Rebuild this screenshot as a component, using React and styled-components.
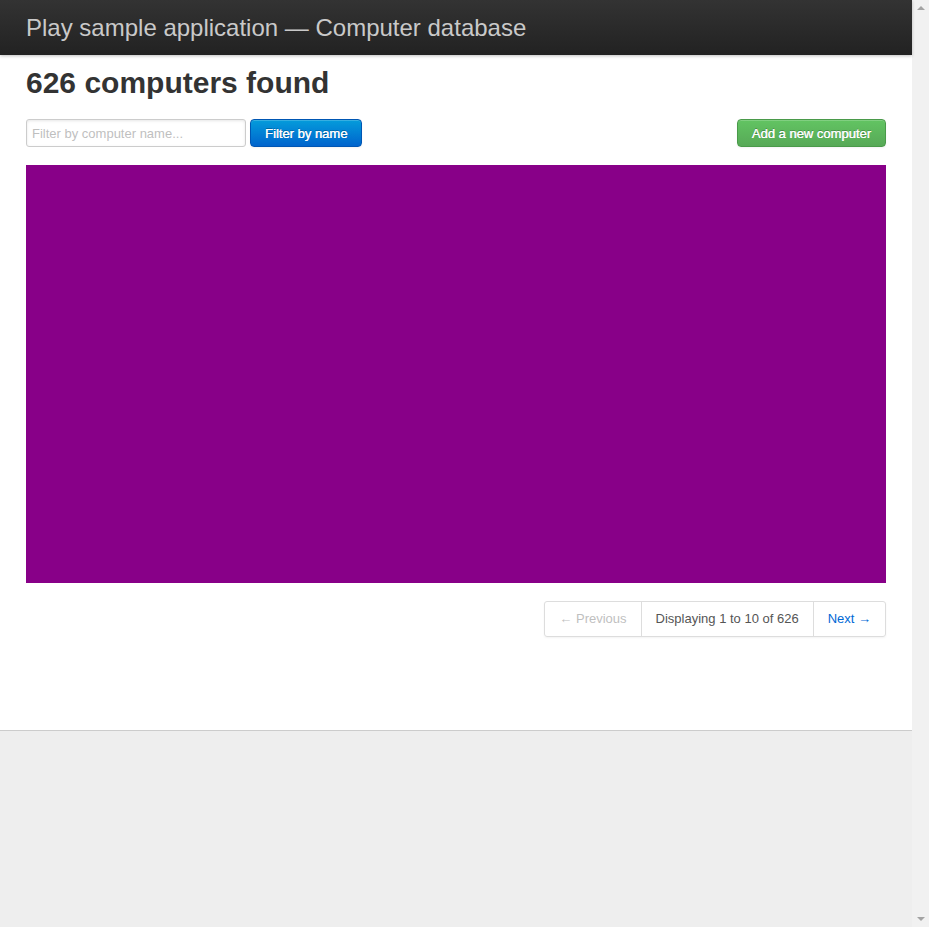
import styled, { createGlobalStyle } from 'styled-components'

const GlobalStyle = createGlobalStyle`
    body {
        margin: 0;
        background: #eeeeee;
        font-family: "Liberation Sans", Arial, sans-serif;
        color: #404040;
    }
`

const Viewport = styled.div`
    display: flex;
    min-height: 927px;
`

const Page = styled.div`
    flex: 1;
    min-width: 0;
`

const ScrollTrack = styled.div`
    width: 17px;
    flex-shrink: 0;
    background: #f1f1f1;
    display: flex;
    flex-direction: column;
    justify-content: space-between;
    align-items: center;
    padding: 6px 0;
    box-sizing: border-box;
`

const ScrollArrow = styled.span`
    width: 0;
    height: 0;
    border-left: 4px solid transparent;
    border-right: 4px solid transparent;
    border-${props => props.$down ? 'top' : 'bottom'}: 4px solid #a3a3a3;
`

const Header = styled.header`
    height: 55px;
    background: linear-gradient(to bottom, #333333, #222222);
    box-shadow: 0 1px 3px rgba(0, 0, 0, 0.25);
    position: relative;
    z-index: 1;
`

const HeaderTitle = styled.h1`
    width: 860px;
    margin: 0 auto;
    padding-top: 13px;
    font-size: 24px;
    font-weight: 400;
    line-height: 30px;
    color: #c9c9c9;
`

const Main = styled.section`
    background: #ffffff;
    border-bottom: 1px solid #cccccc;
    height: 675px;
`

const Container = styled.div`
    width: 860px;
    margin: 0 auto;
    padding-top: 10px;
`

const Title = styled.h2`
    margin: 0;
    font-size: 30px;
    line-height: 36px;
    font-weight: 700;
    color: #333333;
`

const Actions = styled.div`
    display: flex;
    align-items: center;
    margin-top: 18px;
    gap: 4px;
`

const SearchInput = styled.input`
    box-sizing: border-box;
    width: 220px;
    height: 28px;
    padding: 0 5px;
    border: 1px solid #cccccc;
    border-radius: 3px;
    font-family: inherit;
    font-size: 13px;
    color: #808080;
    box-shadow: inset 0 1px 3px rgba(0, 0, 0, 0.1);
    &::placeholder {
        color: #bfbfbf;
    }
`

const Button = styled.button`
    box-sizing: border-box;
    height: 28px;
    padding: 0 14px;
    border-radius: 4px;
    border: 1px solid ${props => props.$border};
    background: linear-gradient(to bottom, ${props => props.$top}, ${props => props.$bottom});
    color: #ffffff;
    font-family: inherit;
    font-size: 13px;
    font-weight: 400;
    text-shadow: 0 -1px 0 rgba(0, 0, 0, 0.25), 0.3px 0 0 #ffffff;
    box-shadow: inset 0 1px 0 rgba(255, 255, 255, 0.2), 0 1px 2px rgba(0, 0, 0, 0.05);
    margin-left: ${props => props.$push ? 'auto' : '0'};
`

const Results = styled.div`
    height: 418px;
    margin-top: 18px;
    background: #880088;
`

const PaginationRow = styled.div`
    display: flex;
    justify-content: flex-end;
    margin-top: 18px;
`

const Pagination = styled.ul`
    display: flex;
    margin: 0;
    padding: 0;
    list-style: none;
    border: 1px solid #dddddd;
    border-radius: 3px;
    box-shadow: 0 1px 2px rgba(0, 0, 0, 0.05);
`

const PageItem = styled.li`
    height: 34px;
    line-height: 34px;
    padding: 0 14px;
    font-size: 13px;
    color: ${props => props.$color};
    border-left: ${props => props.$first ? 'none' : '1px solid #dddddd'};
`

function App() {
    return (
        <>
            <GlobalStyle />
            <Viewport>
                <Page>
                    <Header>
                        <HeaderTitle>Play sample application — Computer database</HeaderTitle>
                    </Header>
                    <Main>
                        <Container>
                            <Title>626 computers found</Title>
                            <Actions>
                                <SearchInput type="search" placeholder="Filter by computer name..." />
                                <Button $top="#049cdb" $bottom="#0064cd" $border="#0056b3">Filter by name</Button>
                                <Button $push $top="#62c462" $bottom="#57a957" $border="#4a9a4a">Add a new computer</Button>
                            </Actions>
                            <Results />
                            <PaginationRow>
                                <Pagination>
                                    <PageItem $first $color="#bfbfbf">← Previous</PageItem>
                                    <PageItem $color="#555555">Displaying 1 to 10 of 626</PageItem>
                                    <PageItem $color="#0069d6">Next →</PageItem>
                                </Pagination>
                            </PaginationRow>
                        </Container>
                    </Main>
                </Page>
                <ScrollTrack>
                    <ScrollArrow />
                    <ScrollArrow $down />
                </ScrollTrack>
            </Viewport>
        </>
    )
}

export default App
